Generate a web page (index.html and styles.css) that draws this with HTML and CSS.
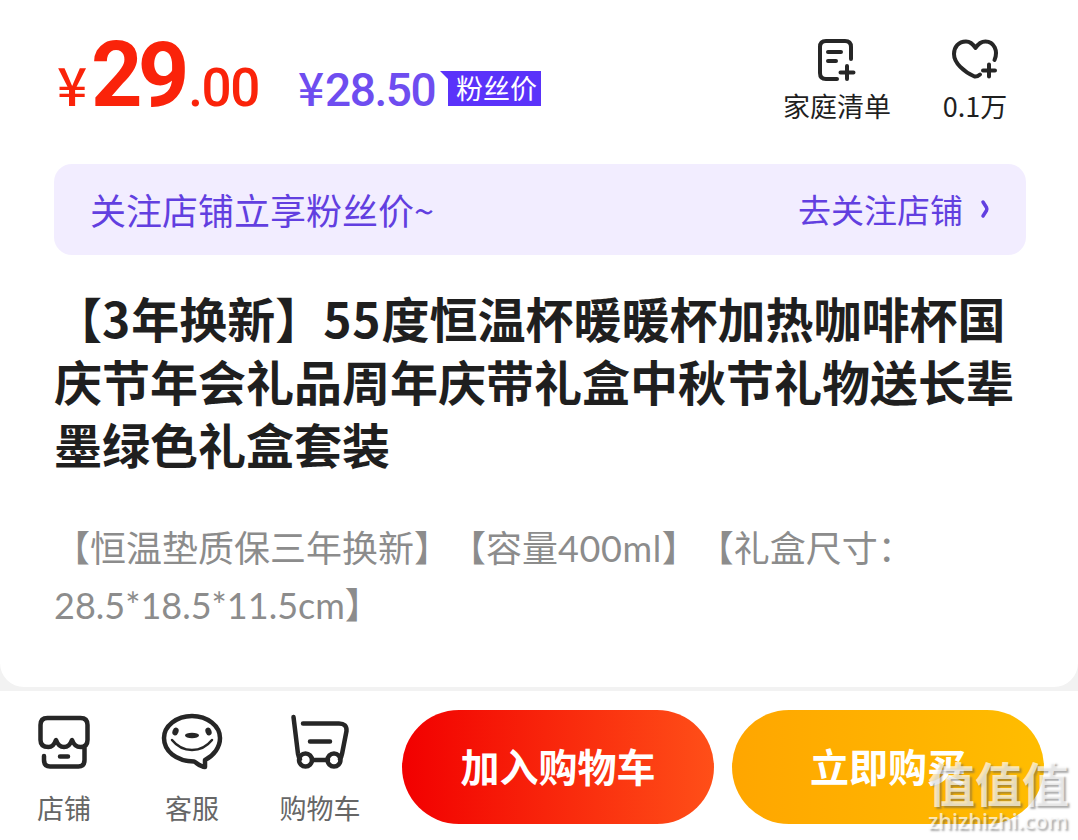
FILE: index.html
```html
<!DOCTYPE html>
<html lang="zh-CN">
<head>
    <meta charset="UTF-8">
    <meta name="viewport" content="width=device-width, initial-scale=1.0">
    <title>商品详情</title>
    <link rel="stylesheet" href="styles.css">
</head>
<body>
<div class="product">
    <div class="top">
        <div class="price"><span class="yen">¥</span><span class="big">29</span><span class="small">.00</span></div>
        <div class="fans-price"><span class="yen">¥</span>28.50</div>
        <div class="fans-tag"><span>粉丝价</span></div>
        <div class="actions">
            <div class="action list">
                <svg width="44" height="46" viewBox="0 0 44 46">
                    <path d="M36 22V10Q36 4 30 4H11Q5 4 5 10V36Q5 42 11 42H22M13 15H26M13 24H21M32 29V42M25.500 35.500H38.500"/>
                </svg>
                <span>家庭清单</span>
            </div>
            <div class="action like">
                <svg width="50" height="46" viewBox="0 0 50 46">
                    <path d="M44.500 23C48.500 14 44 4.500 35.500 4.500C31 4.500 28 7 25.500 11C23 7 20 4.500 16 4.500C8.500 4.500 4 10 4 17C4 26 14 35 24.500 39.500Q27 40 30 37.500M39 27.500V39.500M33 33.500H45"/>
                </svg>
                <span>0.1万</span>
            </div>
        </div>
    </div>

    <div class="banner">
        <span>关注店铺立享粉丝价~</span>
        <a class="follow">去关注店铺
            <svg width="10" height="20" viewBox="0 0 10 20"><path d="M3 3L6.500 8.500Q7.200 10 6.500 11.500L3 17"/></svg>
        </a>
    </div>

    <h1 class="title">【<span>3</span>年换新】<span>55</span>度恒温杯暖暖杯加热咖啡杯国<br>庆节年会礼品周年庆带礼盒中秋节礼物送长辈<br>墨绿色礼盒套装</h1>
    <p class="desc">【恒温垫质保三年换新】【容量<span>400ml</span>】【礼盒尺寸：<br>28.5*18.5*11.5cm】</p>
</div>

<div class="bar">
    <div class="tabs">
        <div class="tab">
            <svg width="64" height="60" viewBox="0 0 64 60">
                <path d="M8.500 27V12Q8.500 5 15.500 5H48.500Q55.500 5 55.500 12V27Q55.500 34 48.500 34Q42.500 34 40 27Q37.500 34 32 34Q26.500 34 24 27Q21.500 34 16.500 34Q8.500 34 8.500 27ZM12 43V47Q12 53.500 18 53.500H46.500Q52.500 53.500 52.500 47V33M28 43.500H36"/>
            </svg>
            <span>店铺</span>
        </div>
        <div class="tab">
            <svg width="64" height="60" viewBox="0 0 64 60">
                <path d="M32 3C16.500 3 4 13 4 25C4 38 16 48 34 48.500C37 50 40 53.500 45 54V47C54 42.500 60 34 60 25C60 13 47.500 3 32 3Z"/>
                <path class="thin" d="M12 27Q20 37 32 37Q44 37 52 27"/>
                <g class="fill">
                    <ellipse cx="15.500" cy="18.500" rx="3" ry="4" transform="rotate(20 15.500 18.500)"/>
                    <ellipse cx="48.500" cy="18.500" rx="3" ry="4" transform="rotate(-20 48.500 18.500)"/>
                    <ellipse cx="32" cy="22.500" rx="7" ry="2.700"/>
                </g>
            </svg>
            <span>客服</span>
        </div>
        <div class="tab">
            <svg width="64" height="60" viewBox="0 0 64 60">
                <path d="M5.500 4L10 41Q10.500 44 12 46M15 10.500H51Q59 10.500 58.500 18L54 41Q53.500 44 52 46M22 28.500H42M24 47H40"/>
                <circle cx="17.500" cy="47" r="6.500"/>
                <circle cx="46" cy="47" r="6.500"/>
            </svg>
            <span>购物车</span>
        </div>
    </div>
    <button class="btn cart">加入购物车</button>
    <button class="btn buy">立即购买</button>
</div>

<div class="watermark">
    <div class="mark">值值值</div>
    <div class="site">zhizhizhi.com</div>
</div>
</body>
</html>
```
FILE: styles.css
```css
* {
    box-sizing: border-box;
}

body {
    margin: 0;
    height: 840px;
    overflow: hidden;
    position: relative;
    background: #f2f2f2;
    font-family: "Noto Sans CJK SC", sans-serif;
    color: #1f1f1f;
    text-spacing-trim: space-all;
}

svg {
    display: block;
    fill: none;
    stroke: #262626;
    stroke-width: 4;
    stroke-linecap: round;
    stroke-linejoin: round;
}

.product {
    height: 687px;
    padding: 36px 52px 0 54px;
    background: #fff;
    border-radius: 0 0 24px 24px;
}

/* price row */
.top {
    display: flex;
    height: 128px;
    font-family: Roboto, "Noto Sans CJK SC", sans-serif;
    font-weight: 500;
}

.price {
    display: flex;
    align-items: baseline;
    width: 244px;
    height: 76px;
    padding-top: 2px;
    line-height: 76px;
    color: #fa230a;
    white-space: nowrap;
}

.yen {
    font-family: "Noto Sans CJK SC", sans-serif;
}

.price .yen {
    width: 37px;
    padding-left: 3px;
    font-size: 53px;
}

.big {
    font-size: 90px;
    font-weight: 700;
    letter-spacing: -5px;
}

.small {
    margin-left: 4px;
    font-size: 53px;
    letter-spacing: -1.5px;
}

.fans-price {
    display: flex;
    align-items: baseline;
    width: 142px;
    height: 76px;
    padding-top: 12px;
    font-size: 46px;
    line-height: 76px;
    letter-spacing: -1.4px;
    color: #6e4df0;
    white-space: nowrap;
}

.fans-price .yen {
    width: 27px;
}

.fans-tag {
    width: 101px;
    height: 35px;
    margin-top: 35px;
    padding-left: 16px;
    background: #5a32fa;
    clip-path: polygon(0 0, 100% 0, 100% 100%, 8px 100%, 8px 8px);
    color: #fff;
    font-size: 27px;
    line-height: 33px;
    font-family: "Noto Sans CJK SC", sans-serif;
    font-weight: 400;
    white-space: nowrap;
}

.actions {
    display: flex;
    margin-left: auto;
    margin-right: 1px;
    font-family: "Noto Sans CJK SC", sans-serif;
    font-size: 27px;
    font-weight: 400;
}

.action {
    display: flex;
    flex-direction: column;
    align-items: center;
    width: 108px;
    padding-top: 1px;
    line-height: 40px;
    white-space: nowrap;
}

.action span {
    margin-top: 3px;
}

.like {
    width: 100px;
    margin-left: 34px;
}

/* follow banner */
.banner {
    display: flex;
    justify-content: space-between;
    align-items: center;
    width: 972px;
    height: 91px;
    padding: 0 36px 2px;
    border-radius: 18px;
    background: #f2edff;
    color: #623fe0;
    font-size: 36px;
}

.follow {
    display: flex;
    align-items: center;
    gap: 17px;
    font-size: 33px;
}

.follow svg {
    stroke: #623fe0;
    stroke-width: 3.5;
}

.title {
    margin: 31px 0 0;
    font-size: 48px;
    line-height: 63px;
    font-weight: 700;
    white-space: nowrap;
}

.title span {
    letter-spacing: 0.8px;
}

.desc {
    margin: 45px 0 0;
    font-family: Lato, "Noto Sans CJK SC", sans-serif;
    font-size: 36px;
    line-height: 57px;
    color: #8c8c8c;
    white-space: nowrap;
}

.desc span {
    letter-spacing: 0.6px;
}

/* bottom bar */
.bar {
    display: flex;
    height: 149px;
    margin-top: 4px;
    padding-top: 19px;
    background: #fff;
}

.tabs {
    display: flex;
    width: 402px;
}

.tab {
    display: flex;
    flex-direction: column;
    align-items: center;
    width: 128px;
    padding-top: 3px;
    font-size: 27px;
    line-height: 40px;
    color: #666;
}

.tab svg {
    stroke-width: 4.5;
}

.tab span {
    margin-top: 15px;
}

.tab .thin {
    stroke-width: 2.5;
}

.tab .fill {
    fill: #262626;
    stroke: none;
}

.btn {
    width: 312px;
    height: 114px;
    padding: 0 0 4px;
    border: none;
    border-radius: 57px;
    color: #fff;
    font-family: inherit;
    font-size: 39px;
    font-weight: 700;
}

.cart {
    background: linear-gradient(90deg, #f20000, #ff4f18);
}

.buy {
    margin-left: 18px;
    background: linear-gradient(90deg, #ffa600, #ffbd00);
}

.watermark {
    position: absolute;
    left: 928px;
    top: 754px;
    color: rgba(255, 255, 255, 0.7);
    text-shadow: 2px 2px 2px rgba(90, 90, 90, 0.5);
    white-space: nowrap;
}

.mark {
    font-size: 47px;
    line-height: 56px;
    font-weight: 700;
}

.site {
    font-family: "Open Sans", sans-serif;
    font-size: 21.5px;
    line-height: 22px;
    font-weight: 600;
}
```
